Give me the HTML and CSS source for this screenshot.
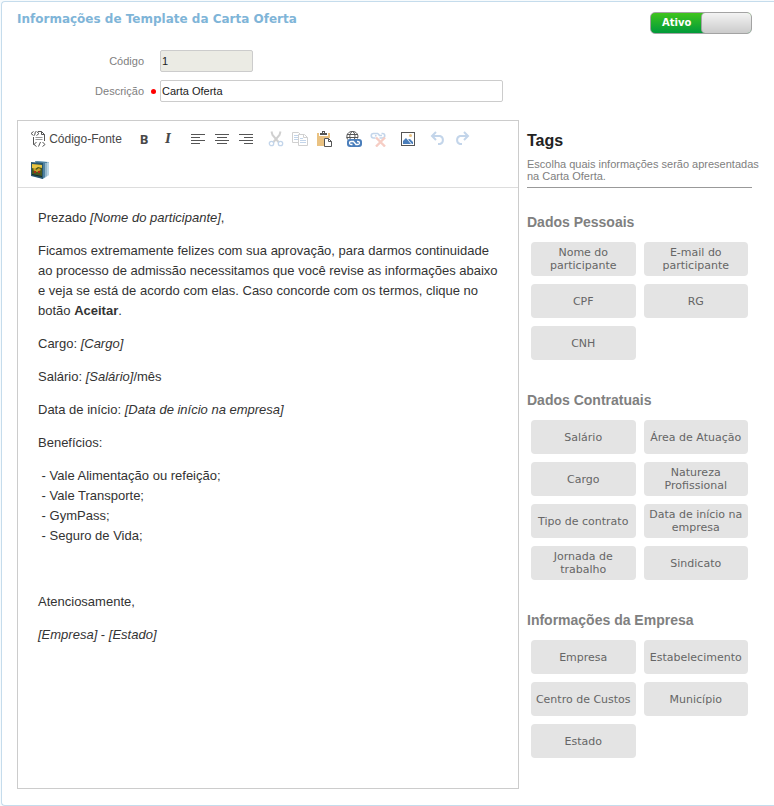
FILE: index.html
```
<!DOCTYPE html>
<html lang="pt-BR">
<head>
    <meta charset="UTF-8">
    <title>Template da Carta Oferta</title>
    <link rel="stylesheet" href="styles.css">
</head>
<body>
    <div class="panel">
        <div class="panel-header">
            <h1>Informações de Template da Carta Oferta</h1>
            <label class="switch">
                <input type="checkbox" checked>
                <span>Ativo</span>
            </label>
        </div>

        <div class="form">
            <div class="field">
                <label for="codigo">Código</label>
                <span class="mark"></span>
                <input type="text" id="codigo" class="short" value="1" readonly>
            </div>
            <div class="field">
                <label for="descricao">Descrição</label>
                <span class="mark required"></span>
                <input type="text" id="descricao" value="Carta Oferta">
            </div>
        </div>

        <div class="content">
            <div class="editor">
                <div class="toolbar">
                    <div class="toolbar-row">
                        <div class="group">
                            <button type="button" class="source">
                                <svg width="16" height="16" viewBox="0 0 16 16" fill="none" stroke="#555">
                                    <path d="M3.500 0.500L1 2.500L3.500 4.500M6.500 0.500L9 2.500L6.500 4.500M4.500 4.500L5.500 0.500"/>
                                    <path d="M8 0.500H11.500L14.500 3.500V10M11.500 0.500V3.500H14.500M3.500 6V13.500H4.500"/>
                                    <path d="M5.500 6.500H12.500M5.500 8.500H12.500" stroke="#999"/>
                                    <path d="M6.500 11L4 13.500L6.500 15.500M12.500 11L15 13.500L12.500 15.500M8.500 15.500L10.500 11"/>
                                </svg>
                                <span>Código-Fonte</span>
                            </button>
                        </div>
                        <div class="group">
                            <button type="button" class="bold" title="Negrito">B</button>
                            <button type="button" class="italic" title="Itálico">I</button>
                        </div>
                        <div class="group">
                            <button type="button" title="Alinhar Esquerda">
                                <svg width="16" height="16" viewBox="0 0 16 16" stroke="#555">
                                    <path d="M1 3.500H15M1 6.500H10M1 9.500H15M1 12.500H10"/>
                                </svg>
                            </button>
                            <button type="button" title="Centralizar">
                                <svg width="16" height="16" viewBox="0 0 16 16" stroke="#555">
                                    <path d="M1 3.500H15M3 6.500H13M1 9.500H15M3 12.500H13"/>
                                </svg>
                            </button>
                            <button type="button" title="Alinhar Direita">
                                <svg width="16" height="16" viewBox="0 0 16 16" stroke="#555">
                                    <path d="M1 3.500H15M6 6.500H15M1 9.500H15M6 12.500H15"/>
                                </svg>
                            </button>
                        </div>
                        <div class="group">
                            <button type="button" title="Recortar" disabled>
                                <svg width="16" height="16" viewBox="0 0 16 16" fill="none">
                                    <path d="M3.500 0.500L4.500 4L10.500 11M12.500 0.500L11.500 4L5.500 11" stroke="#d0d0d0" stroke-width="2"/>
                                    <circle cx="3.500" cy="12.500" r="2.200" stroke="#c3d5ea" stroke-width="1.300"/>
                                    <circle cx="12.500" cy="12.500" r="2.200" stroke="#c3d5ea" stroke-width="1.300"/>
                                </svg>
                            </button>
                            <button type="button" title="Copiar" disabled>
                                <svg width="16" height="16" viewBox="0 0 16 16" fill="#fff" stroke="#d0d0d0">
                                    <path d="M0.500 1.500H6.500L9.500 4.500V11.500H0.500Z"/>
                                    <path d="M2 4.500H6M2 6.500H6M2 8.500H6" stroke="#c3d5ea"/>
                                    <path d="M6.500 3.500H12.500L15.500 6.500V14.500H6.500ZM11.500 3.500V6.500H15.500"/>
                                    <path d="M8 7.500H11M8 9.500H14M8 11.500H14" stroke="#c3d5ea"/>
                                </svg>
                            </button>
                            <button type="button" title="Colar">
                                <svg width="16" height="16" viewBox="0 0 16 16">
                                    <path d="M1 2H14V7H8V15H1Z" fill="#eac282"/>
                                    <path d="M3 1H6V0H9V1H12V5H3Z" fill="#fff"/>
                                    <path d="M4 2H6V0H9V2H11V4H4Z" fill="#555"/>
                                    <path d="M7 1H8V2H7Z" fill="#fff"/>
                                    <path d="M8.500 7.500H12.500L15.500 10.500V15.500H8.500ZM12.500 7.500V10.500H15.500" fill="#fff" stroke="#555"/>
                                </svg>
                            </button>
                        </div>
                        <div class="group">
                            <button type="button" title="Inserir link">
                                <svg width="16" height="16" viewBox="0 0 16 16" fill="none">
                                    <path d="M1.500 8.500C-0.500 3.500 2.500 0.500 6.500 0.500S13 4 11.500 7.500M4.500 8.500C3 5 4 2 6.500 0.500C9 2 9.500 4 8.500 8M1 3.500H12M0.500 6.500H12" stroke="#555"/>
                                    <rect x="1" y="8" width="15" height="8" rx="3" fill="#4a7ebb"/>
                                    <path d="M8 10.500H5A1.500 1.500 0 0 0 5 13.500H6.500M9.500 13.500H12A1.500 1.500 0 0 0 12 10.500H11M7.500 10.500L10 13.500" stroke="#fff" stroke-width="1.300"/>
                                </svg>
                            </button>
                            <button type="button" title="Remover link" disabled>
                                <svg width="16" height="16" viewBox="0 0 16 16" fill="none">
                                    <path d="M8 2.500H3.500A2.200 2.200 0 0 0 3.500 7H5.500M9.500 7H12.500A2.200 2.200 0 0 0 12.500 2.500H11.500M5 4.500L6.500 5M8 2.500L9.500 4.500H12" stroke="#c3d5ea" stroke-width="1.600"/>
                                    <path d="M6 6.500L15 15.500M15 6.500L6 15.500" stroke="#f6cdc4" stroke-width="2.400"/>
                                </svg>
                            </button>
                        </div>
                        <div class="group">
                            <button type="button" title="Imagem">
                                <svg width="16" height="16" viewBox="0 0 16 16">
                                    <rect x="1.500" y="1.500" width="13" height="13" fill="#fff" stroke="#555"/>
                                    <circle cx="10.500" cy="4.500" r="1.500" fill="#eac282"/>
                                    <path d="M3 13V10L6 7L11 13Z" fill="#4a7ebb"/>
                                    <path d="M8 8.500L10 8L13 11V13H12Z" fill="#4a7ebb"/>
                                </svg>
                            </button>
                        </div>
                        <div class="group">
                            <button type="button" title="Desfazer" disabled>
                                <svg width="16" height="16" viewBox="0 0 16 16" fill="none" stroke="#c3d5ea" stroke-width="2">
                                    <path d="M6 1L2 5L6 9M2 5H10A4.200 4.200 0 0 1 10 13H8"/>
                                </svg>
                            </button>
                            <button type="button" title="Refazer" disabled>
                                <svg width="16" height="16" viewBox="0 0 16 16" fill="none" stroke="#c3d5ea" stroke-width="2">
                                    <path d="M10 1L14 5L10 9M14 5H6A4.200 4.200 0 0 0 6 13H8"/>
                                </svg>
                            </button>
                        </div>
                    </div>
                    <div class="toolbar-row">
                        <button type="button" class="gallery" title="Galeria">
                            <svg width="20" height="20" viewBox="0 0 20 20">
                                <path d="M7 1L19 2V15L13 19L7 17Z" fill="#9cc0d6"/>
                                <path d="M5 1L17 2V16L12 19Z" fill="#4f819f"/>
                                <path d="M16 3V17M18 3V16" stroke="#d9ebf4"/>
                                <path d="M1 2L13 3V19L1 16Z" fill="#28576f"/>
                                <path d="M2 4L12 5V16L2 14Z" fill="#4a5a1c"/>
                                <path d="M2 4L12 5V8L8 7L5 9L2 8Z" fill="#e8c545"/>
                                <path d="M3 10L5 8L6 10L9 8L11 10L9 11L7 12L5 11Z" fill="#c9a02b"/>
                                <path d="M4 11H6V13H4ZM8 11H10V13H8Z" fill="#a52c1b"/>
                                <path d="M2 14L12 16V17L2 15Z" fill="#162c22"/>
                            </svg>
                        </button>
                    </div>
                </div>

                <div class="letter" contenteditable="true" spellcheck="false">
                    <p>Prezado <em>[Nome do participante]</em>,</p>
                    <p>Ficamos extremamente felizes com sua aprovação, para darmos continuidade ao processo de admissão necessitamos que você revise as informações abaixo e veja se está de acordo com elas. Caso concorde com os termos, clique no botão <strong>Aceitar</strong>.</p>
                    <p>Cargo: <em>[Cargo]</em></p>
                    <p>Salário: <em>[Salário]</em>/mês</p>
                    <p>Data de início: <em>[Data de início na empresa]</em></p>
                    <p>Benefícios:</p>
                    <p>&nbsp;- Vale Alimentação ou refeição;<br>
                    &nbsp;- Vale Transporte;<br>
                    &nbsp;- GymPass;<br>
                    &nbsp;- Seguro de Vida;</p>
                    <p>&nbsp;</p>
                    <p>Atenciosamente,</p>
                    <p><em>[Empresa]</em> - <em>[Estado]</em></p>
                </div>
            </div>

            <div class="tags">
                <h2>Tags</h2>
                <p class="hint">Escolha quais informações serão apresentadas<br>na Carta Oferta.</p>

                <h3>Dados Pessoais</h3>
                <div class="tag-list">
                    <button type="button">Nome do participante</button>
                    <button type="button">E-mail do participante</button>
                    <button type="button">CPF</button>
                    <button type="button">RG</button>
                    <button type="button">CNH</button>
                </div>

                <h3>Dados Contratuais</h3>
                <div class="tag-list">
                    <button type="button">Salário</button>
                    <button type="button">Área de Atuação</button>
                    <button type="button">Cargo</button>
                    <button type="button">Natureza Profissional</button>
                    <button type="button">Tipo de contrato</button>
                    <button type="button">Data de início na empresa</button>
                    <button type="button">Jornada de trabalho</button>
                    <button type="button">Sindicato</button>
                </div>

                <h3>Informações da Empresa</h3>
                <div class="tag-list">
                    <button type="button">Empresa</button>
                    <button type="button">Estabelecimento</button>
                    <button type="button">Centro de Custos</button>
                    <button type="button">Município</button>
                    <button type="button">Estado</button>
                </div>
            </div>
        </div>
    </div>
</body>
</html>
```
FILE: styles.css
```
* {
    box-sizing: border-box;
}
body {
    margin: 0;
    padding: 1px 0 0 1px;
    background: #f7fbfd;
    font-family: "Liberation Sans", Arial, sans-serif;
    font-size: 11px;
    color: #808080;
}
h1, h2, h3, p {
    margin: 0;
}
button {
    font-family: inherit;
    border: none;
    cursor: pointer;
}
.panel {
    padding: 10px 22px 16px 15px;
    background: #fff;
    border: 1px solid #c5dcec;
    border-right: none;
    border-radius: 4px 0 0 4px;
}

/* header */
.panel-header {
    display: flex;
    justify-content: space-between;
    height: 38px;
}
h1 {
    font-family: "DejaVu Sans", Verdana, sans-serif;
    font-size: 12px;
    line-height: 14px;
    color: #7fb5d8;
}
.switch {
    position: relative;
    width: 102px;
    height: 22px;
    padding-left: 11px;
    border: 1px solid #a3a3a3;
    border-radius: 5px;
    background: linear-gradient(#3fc41c, #009a3a);
    font-family: "DejaVu Sans", Verdana, sans-serif;
    font-size: 10px;
    font-weight: bold;
    line-height: 20px;
    color: #fff;
    cursor: pointer;
}
.switch input {
    appearance: none;
    position: absolute;
    top: 0;
    right: 0;
    width: 50px;
    height: 20px;
    margin: 0;
    border-left: 1px solid #a3a3a3;
    border-radius: 4px;
    background: linear-gradient(#f3f3f3, #cbcbcb);
}

/* form */
.field {
    display: flex;
    align-items: center;
    margin-bottom: 8px;
}
.field label {
    width: 127px;
    text-align: right;
}
.mark {
    width: 16px;
    height: 5px;
}
.required::before {
    content: "";
    display: block;
    width: 5px;
    height: 5px;
    margin-left: 7px;
    border-radius: 50%;
    background: #f00;
}
.field input {
    width: 343px;
    height: 22px;
    padding: 0 1px;
    border: 1px solid #ccc;
    border-radius: 2px;
    font-family: inherit;
    font-size: 11px;
    color: #222;
}
.field .short {
    width: 93px;
    background: #ebebe4;
}

/* editor */
.content {
    display: flex;
    gap: 8px;
    margin-top: 18px;
}
.editor {
    flex: 1;
    border: 1px solid #ccc;
}
.toolbar {
    padding: 6px 8px 5px;
    border-bottom: 1px solid #ddd;
}
.toolbar-row {
    display: flex;
    gap: 6px;
    margin-bottom: 7px;
}
.toolbar-row:last-child {
    margin-bottom: 0;
}
.group {
    display: flex;
}
.toolbar button {
    display: flex;
    align-items: center;
    justify-content: center;
    width: 24px;
    height: 24px;
    padding: 0;
    background: none;
    font-size: 12px;
    color: #484848;
}
.toolbar .source {
    width: 100px;
    gap: 3px;
    white-space: nowrap;
}
.toolbar .bold {
    font-family: "Noto Sans", sans-serif;
    font-size: 13px;
    font-weight: bold;
}
.toolbar .italic {
    font-family: "DejaVu Serif", serif;
    font-size: 12px;
    font-style: italic;
    font-weight: bold;
}
.toolbar .gallery {
    width: 28px;
}
.letter {
    padding: 20px;
    font-size: 13px;
    line-height: 20px;
    color: #333;
    outline: none;
}
.letter p {
    margin-bottom: 13px;
}

/* tags */
.tags {
    width: 225px;
    padding-bottom: 31px;
}
h2 {
    margin: 12px 0 8px;
    font-size: 16px;
    line-height: 18px;
    color: #222;
}
.hint {
    padding-bottom: 5px;
    border-bottom: 1px solid #999;
    line-height: 12px;
    white-space: nowrap;
}
h3 {
    margin: 32px 0 12px;
    font-size: 14px;
    line-height: 16px;
}
.hint + h3 {
    margin-top: 26px;
}
.tag-list {
    display: grid;
    grid-template-columns: 1fr 1fr;
    gap: 8px;
    padding: 0 4px;
}
.tag-list button {
    height: 34px;
    padding: 0 4px;
    border-radius: 4px;
    background: #e4e4e4;
    font-family: "DejaVu Sans", Verdana, sans-serif;
    font-size: 11px;
    line-height: 13px;
    color: #666;
}
```
